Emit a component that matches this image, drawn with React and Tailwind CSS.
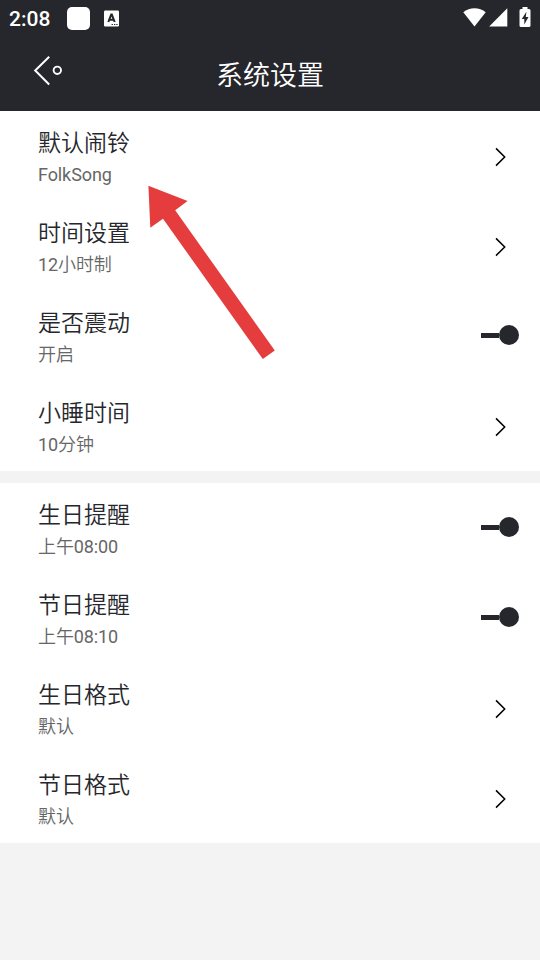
import React, { useState } from 'react';

const alarmSettings = [
  { id: 'ring', title: '默认闹铃', value: 'FolkSong' },
  { id: 'time', title: '时间设置', value: '12小时制' },
  { id: 'vibrate', title: '是否震动', value: '开启', toggle: true },
  { id: 'snooze', title: '小睡时间', value: '10分钟' },
];

const reminderSettings = [
  { id: 'birthday', title: '生日提醒', value: '上午08:00', toggle: true },
  { id: 'festival', title: '节日提醒', value: '上午08:10', toggle: true },
  { id: 'birthdayFormat', title: '生日格式', value: '默认' },
  { id: 'festivalFormat', title: '节日格式', value: '默认' },
];

function StatusBar() {
  return (
    <div className="flex h-9 items-center pl-[9px] pr-[9px] pt-px">
      <span className="w-[58px] text-[21px] font-medium leading-9">2:08</span>
      <span className="h-[23px] w-[23px] rounded-[5px] bg-white" />
      <svg className="ml-[14px]" width="15" height="17" viewBox="0 0 15 17">
        <rect y="0.5" width="15" height="16" rx="1.2" fill="#fff" />
        <path d="M4.3 12 L7.2 4.6 H7.8 L10.7 12 M5.2 9.8 H9.8" fill="none" stroke="#26272c" strokeWidth="2" />
        <path d="M7.6 14.5h1.3M10 14.5h1.3M12.3 14.5h1.3" stroke="#26272c" strokeWidth="1.2" />
      </svg>
      <svg className="-mt-0.5 ml-auto" width="23" height="19" viewBox="0 0 23 19">
        <path d="M0.3 4.2 C6.5 -1.2 16.5 -1.2 22.7 4.2 L11.5 18.5 Z" fill="#fff" />
      </svg>
      <svg className="-mt-0.5 ml-[3px]" width="19" height="19" viewBox="0 0 19 19">
        <path d="M18.3 0.3 V18.5 H0.2 Z" fill="#fff" />
      </svg>
      <svg className="-mt-0.5 ml-[11px]" width="12" height="21" viewBox="0 0 12 21">
        <path d="M3.5 0h5v2H10q1.5 0 1.5 1.5v15q0 1.5-1.5 1.5H2Q.5 20 .5 18.5v-15Q.5 2 2 2h1.5z" fill="#fff" />
        <path d="M7.4 4.8 L2.8 12 H5.3 V17.5 L9.5 10 H6.8 Z" fill="#26272c" />
      </svg>
    </div>
  );
}

function Header() {
  return (
    <header className="grid h-[75px] grid-cols-3 items-center">
      <button className="pl-[33px]" aria-label="返回">
        <svg className="-mt-[5px]" width="32" height="32" viewBox="0 0 32 32" fill="none" stroke="#fff">
          <path d="M16.2 1.8 L2.2 15.5 L16.2 29.5" strokeWidth="2" />
          <circle cx="24.3" cy="15.3" r="3.7" strokeWidth="1.9" />
        </svg>
      </button>
      <h1 className="pt-[5px] text-center text-[27px] font-[350] leading-9">系统设置</h1>
    </header>
  );
}

function Toggle({ on, onClick }) {
  return (
    <button
      onClick={onClick}
      className={`mr-[21px] mt-[-2px] flex items-center ${on ? '' : 'flex-row-reverse'}`}
    >
      <span className="h-[5px] w-[18px] bg-[#26272c]" />
      <span className="h-5 w-5 rounded-full bg-[#26272c]" />
    </button>
  );
}

function SettingRow({ item, on, onToggle }) {
  return (
    <div className="flex h-[90px] items-center justify-between pl-[38px]">
      <div className="pt-[7px]">
        <div className="text-[23px] font-[350] leading-[31px] text-[#26272c]">{item.title}</div>
        <div className="font-[Roboto,'Noto_Sans_CJK_SC_DemiLight','Noto_Sans_CJK_SC',sans-serif] text-[18px] leading-8 tracking-[-0.1px] text-[#666666]">
          {item.value}
        </div>
      </div>
      {item.toggle ? (
        <Toggle on={on} onClick={onToggle} />
      ) : (
        <svg className="mr-[33px] mt-[2px]" width="12" height="20" viewBox="0 0 12 20">
          <path d="M1 1.4 L9.7 10 L1 18.6" fill="none" stroke="#000" strokeWidth="1.5" />
        </svg>
      )}
    </div>
  );
}

// Red pointer drawn over the first settings group
function PointerArrow() {
  return (
    <svg
      className="pointer-events-none absolute left-[140px] top-[180px]"
      width="140"
      height="184"
      viewBox="140 180 140 184"
    >
      <path d="M148.4 185.8 L187.6 201 L175.2 210.3 L274.8 350.5 L262.8 359 L163 218.8 L150.3 227.8 Z" fill="#e53d3d" />
    </svg>
  );
}

export default function App() {
  const [toggles, setToggles] = useState({ vibrate: true, birthday: true, festival: true });

  const handleToggle = (id) => {
    setToggles({ ...toggles, [id]: !toggles[id] });
  };

  const groups = [alarmSettings, reminderSettings];

  return (
    <div className="relative min-h-screen bg-[#f3f3f3] font-[Roboto,'Noto_Sans_CJK_SC',sans-serif]">
      <div className="h-[111px] bg-[#26272c] text-white">
        <StatusBar />
        <Header />
      </div>

      <main className="flex flex-col gap-3">
        {groups.map((group) => (
          <section key={group[0].id} className="bg-white">
            {group.map((item) => (
              <SettingRow
                key={item.id}
                item={item}
                on={toggles[item.id]}
                onToggle={() => handleToggle(item.id)}
              />
            ))}
          </section>
        ))}
      </main>

      <PointerArrow />
    </div>
  );
}
